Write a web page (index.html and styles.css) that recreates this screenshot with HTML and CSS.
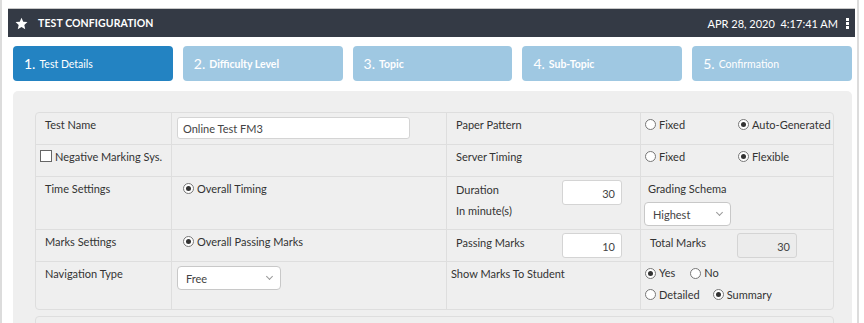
FILE: index.html
```html
<!DOCTYPE html>
<html lang="en">
<head>
<meta charset="UTF-8">
<title>Test Configuration</title>
<link rel="stylesheet" href="styles.css">
</head>
<body>
<div class="page">
    <div class="topbar">
        <svg class="star" width="13" height="13" viewBox="0 0 24 24"><path fill="#fff" d="M12 1.5l3.2 7.1 7.8.8-5.8 5.3 1.7 7.7L12 18.4l-6.9 4 1.7-7.7L1 9.4l7.8-.8z"/></svg>
        <span class="title">TEST CONFIGURATION</span>
        <span class="clock">APR 28, 2020&nbsp;&nbsp;4:17:41 AM</span>
        <span class="kebab"><i></i><i></i><i></i></span>
    </div>

    <div class="steps">
        <div class="step active"><b>1.</b> Test Details</div>
        <div class="step"><b>2.</b> Difficulty Level</div>
        <div class="step"><b>3.</b> Topic</div>
        <div class="step"><b>4.</b> Sub-Topic</div>
        <div class="step light"><b>5.</b> Confirmation</div>
    </div>

    <div class="panel">
        <div class="grid">
            <div class="row r1">
                <div class="cell lbl">Test Name</div>
                <div class="cell"><div class="field wide">Online Test FM3</div></div>
                <div class="cell lbl">Paper Pattern</div>
                <div class="cell opts">
                    <span class="opt first"><span class="radio"></span>Fixed</span>
                    <span class="opt"><span class="radio on"></span>Auto-Generated</span>
                </div>
            </div>
            <div class="row r2">
                <div class="cell lbl chk"><span class="box"></span>Negative Marking Sys.</div>
                <div class="cell"></div>
                <div class="cell lbl">Server Timing</div>
                <div class="cell opts">
                    <span class="opt first"><span class="radio"></span>Fixed</span>
                    <span class="opt"><span class="radio on"></span>Flexible</span>
                </div>
            </div>
            <div class="row r3">
                <div class="cell lbl">Time Settings</div>
                <div class="cell pick"><span class="opt"><span class="radio on"></span>Overall Timing</span></div>
                <div class="cell split">
                    <div class="lbl-stack">Duration<br>In minute(s)</div>
                    <div class="field num">30</div>
                </div>
                <div class="cell grade">
                    <div>Grading Schema</div>
                    <div class="select small">Highest<span class="caret"></span></div>
                </div>
            </div>
            <div class="row r4">
                <div class="cell lbl">Marks Settings</div>
                <div class="cell pick"><span class="opt"><span class="radio on"></span>Overall Passing Marks</span></div>
                <div class="cell split">
                    <div class="lbl-stack">Passing Marks</div>
                    <div class="field num">10</div>
                </div>
                <div class="cell split total">
                    <div class="lbl-stack">Total Marks</div>
                    <div class="field num off">30</div>
                </div>
            </div>
            <div class="row r5">
                <div class="cell lbl">Navigation Type</div>
                <div class="cell"><div class="select nav">Free<span class="caret"></span></div></div>
                <div class="cell lbl show">Show Marks To Student</div>
                <div class="cell stack">
                    <div><span class="opt"><span class="radio on"></span>Yes</span><span class="opt no"><span class="radio"></span>No</span></div>
                    <div><span class="opt"><span class="radio"></span>Detailed</span><span class="opt sum"><span class="radio on"></span>Summary</span></div>
                </div>
            </div>
        </div>
        <div class="next-box"></div>
    </div>
</div>
</body>
</html>
```

FILE: styles.css
```css
body {
    margin: 0;
    font-family: Lato, "Open Sans", sans-serif;
    font-size: 11px;
    color: #333;
    background-color: #fff;
    overflow: hidden;
}
.page {
    box-sizing: border-box;
    width: 859px;
    height: 323px;
    padding: 8px 2px 0 6px;
    border-left: 2px solid #dcdcdc;
    border-right: 2px solid #dcdcdc;
}
.topbar {
    display: flex;
    align-items: center;
    height: 28px;
    padding: 0 6px 0 7px;
    background-color: #343a45;
    border-top: 1px solid #c8c8c8;
    color: #fff;
}
.star {
    margin-right: 10px;
}
.title {
    font-weight: bold;
    font-size: 10.5px;
    letter-spacing: 0.1px;
}
.clock {
    margin-left: auto;
    font-size: 11px;
}
.kebab {
    display: flex;
    flex-direction: column;
    gap: 1px;
    margin-left: 8px;
}
.kebab i {
    width: 3px;
    height: 3px;
    background-color: #fff;
}
.steps {
    display: flex;
    gap: 10px;
    margin: 9px 3px 0 5px;
}
.step {
    flex: 1;
    height: 35px;
    display: flex;
    align-items: center;
    padding-left: 11px;
    border-radius: 4px;
    background-color: #9fc8e2;
    color: #fff;
    font-weight: bold;
    font-size: 10.5px;
}
.step b {
    font-weight: normal;
    font-size: 14px;
    margin-right: 4px;
}
.step.active {
    background-color: #2383c2;
    font-weight: normal;
}
.step.light {
    font-weight: normal;
}
.panel {
    margin: 10px 3px 0 5px;
    padding: 21px 18px 0 22px;
    height: 211px;
    overflow: hidden;
    background-color: #efefef;
    border-radius: 5px 5px 0 0;
}
.grid {
    border: 1px solid #dedede;
    border-radius: 4px;
}
.row {
    display: grid;
    grid-template-columns: 136px 275px 194px 1fr;
    border-bottom: 1px solid #dedede;
}
.row:last-child {
    border-bottom: none;
}
.r1, .r2, .r4 { height: 31px; }
.r3 { height: 52px; }
.r5 { height: 47px; }
.cell {
    border-right: 1px solid #dedede;
    padding: 4px 4px 0 9px;
}
.cell:last-child {
    border-right: none;
}
.lbl {
    padding-top: 5px;
}
.field {
    height: 22px;
    line-height: 22px;
    padding: 0 5px;
    background-color: #fff;
    border: 1px solid #d4d4d4;
    border-radius: 3px;
    color: #444;
    box-sizing: border-box;
}
.field.wide {
    width: 233px;
    margin: 0 0 0 -4px;
}
.opts {
    display: flex;
    align-items: flex-start;
    white-space: nowrap;
    padding: 5px 0 0 4px;
}
.opt {
    display: inline-flex;
    align-items: center;
    white-space: nowrap;
}
.opts .first {
    width: 93px;
}
.radio {
    width: 9px;
    height: 9px;
    border: 1px solid #777;
    border-radius: 50%;
    background-color: #fff;
    margin-right: 3px;
    position: relative;
}
.radio.on::after {
    content: "";
    position: absolute;
    left: 2px;
    top: 2px;
    width: 5px;
    height: 5px;
    border-radius: 50%;
    background-color: #333;
}
.chk {
    display: flex;
    align-items: flex-start;
    padding-left: 4px;
}
.box {
    width: 10px;
    height: 10px;
    border: 1px solid #666;
    background-color: #fff;
    margin-right: 3px;
}
.pick {
    padding: 5px 0 0 11px;
}
.split {
    display: flex;
    justify-content: space-between;
    padding: 3px 18px 0 9px;
}
.lbl-stack {
    line-height: 21px;
    margin-top: -1px;
}
.field.num {
    width: 60px;
    height: 25px;
    line-height: 25px;
    text-align: right;
    padding-right: 6px;
}
.field.off {
    background-color: #ececec;
}
.grade {
    padding: 5px 0 0 7px;
}
.grade > div:first-child {
    margin-bottom: 7px;
}
.select {
    display: flex;
    align-items: center;
    justify-content: space-between;
    height: 24px;
    padding: 0 8px;
    background-color: #fff;
    border: 1px solid #c8c8c8;
    border-radius: 4px;
    box-sizing: border-box;
    color: #444;
}
.select.small {
    width: 87px;
    margin-left: -4px;
}
.select.nav {
    width: 104px;
    margin: 0 0 0 -4px;
}
.caret {
    width: 4px;
    height: 4px;
    border-right: 1px solid #999;
    border-bottom: 1px solid #999;
    transform: rotate(45deg);
    margin-top: -3px;
}
.total {
    padding-right: 36px;
}
.show {
    padding-left: 4px;
}
.stack {
    padding: 1px 0 0 4px;
    line-height: 20px;
}
.stack .no {
    margin-left: 15px;
}
.stack .sum {
    margin-left: 13px;
}
.next-box {
    margin-top: 6px;
    height: 20px;
    border: 1px solid #dedede;
    border-radius: 4px;
}
```
